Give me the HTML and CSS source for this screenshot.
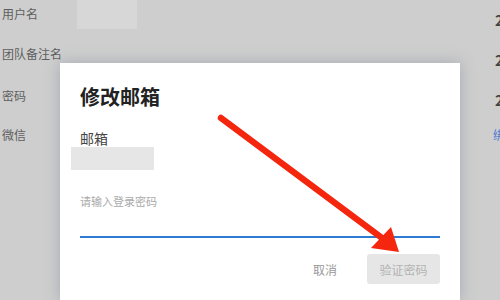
FILE: index.html
```html
<!DOCTYPE html>
<html lang="zh">
<head>
<meta charset="utf-8">
<link rel="stylesheet" href="styles.css">
</head>
<body>
<div class="page">
  <div class="rows">
    <div class="row"><span class="label">用户名</span><span class="value-box"></span></div>
    <div class="row"><span class="label">团队备注名</span></div>
    <div class="row"><span class="label">密码</span></div>
    <div class="row"><span class="label">微信</span></div>
  </div>
  <div class="edge">
    <span class="edge-item">2</span>
    <span class="edge-item">2</span>
    <span class="edge-item">2</span>
    <span class="edge-item link">绑</span>
  </div>
  <div class="dialog">
    <div class="title">修改邮箱</div>
    <div class="field-label">邮箱</div>
    <div class="email-box"></div>
    <div class="placeholder">请输入登录密码</div>
    <div class="underline"></div>
    <div class="actions">
      <span class="cancel">取消</span>
      <span class="verify">验证密码</span>
    </div>
  </div>
  <svg class="arrow" width="500" height="300" viewBox="0 0 500 300">
    <line x1="221" y1="118" x2="382" y2="238" stroke="#f4260e" stroke-width="6.5" stroke-linecap="round"/>
    <polygon points="371,248 391,227 399,252" fill="#f4260e"/>
  </svg>
</div>
</body>
</html>
```
FILE: styles.css
```css
html, body {
  margin: 0;
  padding: 0;
}
body {
  width: 500px;
  height: 300px;
  overflow: hidden;
  background: #cecece;
  font-family: "Noto Sans CJK SC", "Noto Sans", sans-serif;
}
.page {
  position: relative;
  width: 500px;
  height: 300px;
  overflow: hidden;
}
.rows {
  display: flex;
  flex-direction: column;
  padding-left: 2px;
}
.row {
  height: 40px;
  display: flex;
  align-items: flex-start;
}
.row:nth-child(1) { height: 39px; }
.row:nth-child(2) { height: 42px; }
.row:nth-child(3) { height: 39px; }
.label {
  font-size: 12px;
  line-height: 16px;
  color: #5e5e5e;
  width: 75px;
  margin-top: 7px;
}
.row:nth-child(1) .label { margin-top: 6px; }
.value-box {
  width: 60px;
  height: 29px;
  background: #d7d7d7;
}
.edge {
  position: absolute;
  left: 495px;
  top: 10px;
  display: flex;
  flex-direction: column;
  gap: 20px;
}
.edge-item {
  font-size: 14px;
  line-height: 20px;
  color: #444;
  font-weight: 700;
}
.edge-item.link {
  color: #4a7ad0;
  font-weight: 400;
  font-size: 12px;
  margin-left: -2px;
  margin-top: -5px;
}
.dialog {
  position: absolute;
  left: 60px;
  top: 63px;
  width: 400px;
  height: 237px;
  background: #fff;
  box-sizing: border-box;
  padding: 22px 20px 0 20px;
  box-shadow: 0 0 14px rgba(90, 100, 125, 0.35);
  display: flex;
  flex-direction: column;
}
.title {
  font-size: 20px;
  line-height: 24px;
  font-weight: 600;
  color: #222;
}
.field-label {
  margin-top: 20px;
  font-size: 14px;
  line-height: 18px;
  color: #444;
}
.email-box {
  margin-left: -9px;
  width: 83px;
  height: 23px;
  background: #e6e6e6;
}
.placeholder {
  margin-top: 24px;
  font-size: 11px;
  line-height: 14px;
  color: #aaa;
}
.underline {
  margin-top: 28px;
  height: 2px;
  width: 360px;
  background: #2f7bd4;
}
.actions {
  margin-top: 16px;
  display: flex;
  justify-content: flex-end;
  align-items: center;
  gap: 30px;
}
.cancel {
  font-size: 12px;
  color: #999;
}
.verify {
  width: 73px;
  height: 30px;
  border-radius: 3px;
  background: #e6e6e6;
  color: #b3b3b3;
  font-size: 12px;
  display: flex;
  align-items: center;
  justify-content: center;
}
.arrow {
  position: absolute;
  left: 0;
  top: 0;
}
```
